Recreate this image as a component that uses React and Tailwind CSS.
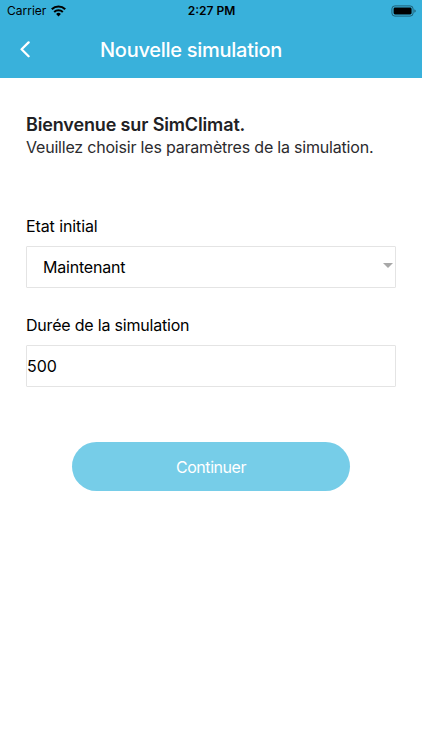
import { useState } from "react";

function StatusBar() {
  return (
    <div className="flex h-[22px] items-center justify-between pl-[7px] pr-1.5 tracking-normal text-black">
      <div className="flex w-28 items-center gap-[5px]">
        <span className="text-[12px] leading-[22px]">Carrier</span>
        <svg width="15" height="12" viewBox="0 0 15 12" fill="none">
          <path d="M0.8 4.2a9.6 9.6 0 0 1 13.4 0" stroke="black" strokeWidth="2.2" />
          <path d="M3.2 7a6.2 6.2 0 0 1 8.6 0" stroke="black" strokeWidth="2" />
          <path d="M7.5 11.6 5.1 9a3.5 3.5 0 0 1 4.8 0z" fill="black" />
        </svg>
      </div>
      <span className="text-[12px] font-semibold leading-[22px]">2:27 PM</span>
      <div className="flex w-28 justify-end">
        <svg width="25" height="12" viewBox="0 0 25 12">
          <rect x="0.9" y="0.9" width="21.2" height="10.2" rx="3" fill="none" stroke="black" strokeOpacity="0.45" />
          <rect x="2.6" y="2.5" width="18" height="7" rx="1.4" fill="black" />
          <path d="M23.5 4.2c1.4.6 1.4 3 0 3.6z" fill="black" fillOpacity="0.6" />
        </svg>
      </div>
    </div>
  );
}

function Header() {
  return (
    <header className="h-[77.5px] bg-[#39b1db]">
      <StatusBar />
      <div className="flex h-[55px] items-center">
        <button className="ml-5 flex w-20 items-center" aria-label="Retour">
          <svg width="10" height="17" viewBox="0 0 10 17" fill="none">
            <path d="M8.6 1.4 1.6 8.3l7 6.9" stroke="white" strokeWidth="2.3" strokeLinecap="round" strokeLinejoin="round" />
          </svg>
        </button>
        <h1 className="mt-px whitespace-nowrap text-[20px] font-medium tracking-[-0.27px] text-white">
          Nouvelle simulation
        </h1>
      </div>
    </header>
  );
}

export default function App() {
  const [duree, setDuree] = useState("500");

  return (
    <div className="h-[750px] w-[422px] overflow-hidden bg-white font-['Inter',sans-serif] text-[16px] tracking-[-0.2px] text-black">
      <Header />

      <main className="px-[26px] pt-[35.5px]">
        {/* Introduction */}
        <h2 className="text-[18px] font-semibold leading-6 tracking-[-0.14px] text-[#212124]">Bienvenue sur SimClimat.</h2>
        <p className="-mt-px whitespace-nowrap leading-[22px] text-[#2b2b2e]">Veuillez choisir les paramètres de la simulation.</p>

        {/* Etat initial */}
        <div className="mt-[58px]">
          <label className="block leading-5 tracking-[-0.1px]">Etat initial</label>
          <div className="mt-[10px] flex h-[42px] items-center justify-between rounded-[1px] border border-[#e4e4e4] pl-4 pr-[2px]">
            <span>Maintenant</span>
            <svg className="mb-[3px]" width="10" height="5" viewBox="0 0 10 5">
              <path d="M0 0h10L5 5z" fill="#a8a8a8" />
            </svg>
          </div>
        </div>

        {/* Durée */}
        <div className="mt-[27px]">
          <label className="block leading-5">Durée de la simulation</label>
          <input
            className="mt-[10px] block h-[42px] w-full rounded-[1px] border border-[#e4e4e4] p-0 tracking-normal outline-none"
            value={duree}
            onChange={(e) => setDuree(e.target.value)}
          />
        </div>

        <button className="mx-auto mt-[55px] block h-[49px] w-[278px] rounded-full bg-[#76cde8] tracking-[-0.45px] text-white">
          Continuer
        </button>
      </main>
    </div>
  );
}
